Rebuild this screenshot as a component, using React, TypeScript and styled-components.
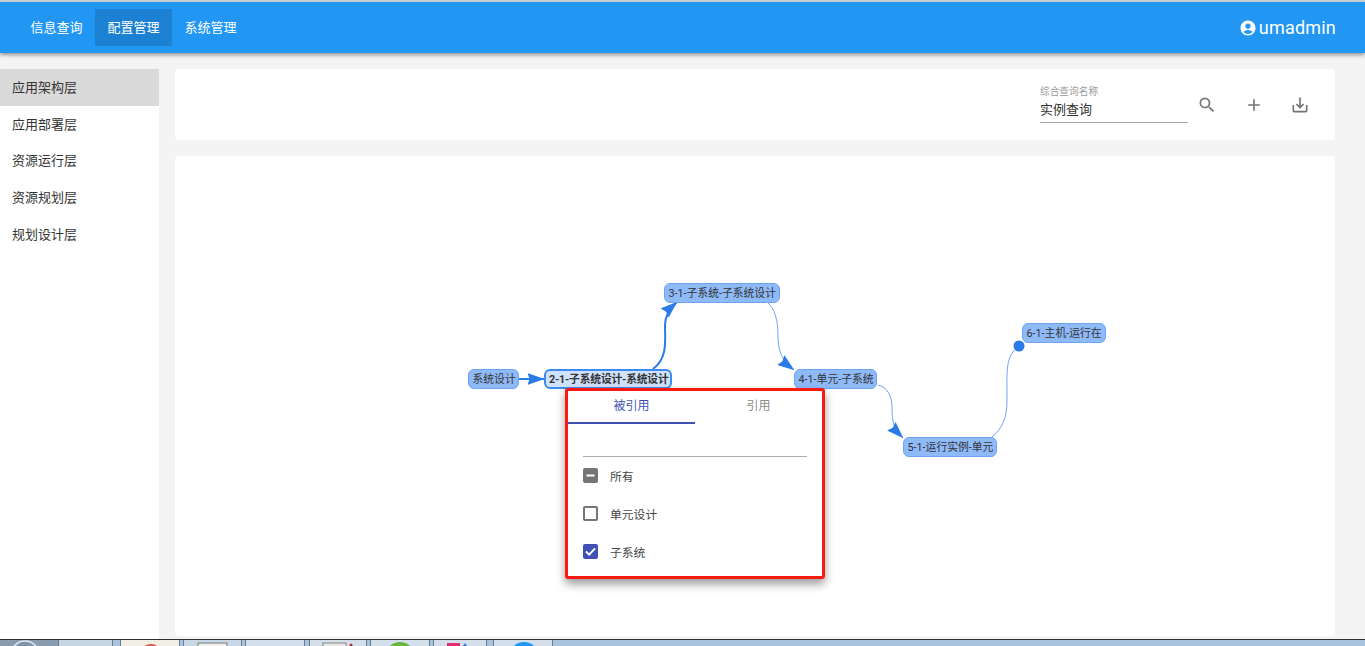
import React from 'react';
import styled, { createGlobalStyle } from 'styled-components';
import { MdAccountCircle, MdSearch, MdAdd, MdSaveAlt } from 'react-icons/md';

const GlobalStyle = createGlobalStyle`
  html, body {
    margin: 0;
    padding: 0;
    height: 100%;
    overflow: hidden;
    background: #f4f4f4;
    font-family: Roboto, "Noto Sans CJK SC", sans-serif;
  }
`;

const Page = styled.div`
  display: flex;
  flex-direction: column;
  width: 1365px;
  height: 646px;
  overflow: hidden;
`;

const Header = styled.header`
  display: flex;
  flex: none;
  align-items: center;
  justify-content: space-between;
  height: 51px;
  border-top: 2px solid #c9cccf;
  padding: 0 29px 0 18px;
  background: #2196f3;
  box-shadow: 0 2px 4px rgba(0, 0, 0, 0.4);
  position: relative;
  z-index: 2;
`;

const Nav = styled.nav`
  display: flex;
  height: 37px;
`;

const NavItem = styled.a<{ $active?: boolean }>`
  display: flex;
  align-items: center;
  padding: 0 12.5px 2px;
  font-size: 13px;
  color: #fff;
  background: ${({ $active }) => ($active ? '#1d81d3' : 'transparent')};
`;

const User = styled.div`
  display: flex;
  align-items: center;
  gap: 2px;
  font-size: 18px;
  letter-spacing: 0.2px;
  color: #fff;
`;

const Body = styled.div`
  display: flex;
  flex: 1;
  min-height: 0;
  padding-top: 16px;
`;

const Sidebar = styled.aside`
  flex: none;
  width: 159px;
  background: #fff;
`;

const MenuItem = styled.div<{ $active?: boolean }>`
  display: flex;
  align-items: center;
  box-sizing: border-box;
  height: 36.75px;
  padding: 0 0 2px 12px;
  font-size: 13px;
  color: #333;
  background: ${({ $active }) => ($active ? '#dadada' : 'transparent')};
`;

const Main = styled.main`
  display: flex;
  flex: 1;
  flex-direction: column;
  gap: 16px;
  padding: 0 30px 3px 16px;
`;

const SearchCard = styled.section`
  display: flex;
  flex: none;
  align-items: center;
  justify-content: flex-end;
  height: 71px;
  padding-right: 11.75px;
  border-radius: 4px;
  background: #fff;
`;

const Field = styled.div`
  display: flex;
  flex-direction: column;
  width: 148px;
  margin: 0 -4.25px 2px 0;
  border-bottom: 1px solid #a8a8a8;
`;

const FieldLabel = styled.label`
  font-size: 9.7px;
  line-height: 13px;
  color: #999;
`;

const FieldValue = styled.div`
  height: 24px;
  font-size: 13px;
  line-height: 24px;
  color: #333;
`;

const IconButton = styled.button`
  display: flex;
  align-items: center;
  justify-content: center;
  width: 46.5px;
  height: 40px;
  padding: 0;
  border: 0;
  background: none;
  color: #757575;
`;

const GraphCard = styled.section`
  position: relative;
  flex: 1;
  border-radius: 4px;
  background: #fff;
`;

const EdgeLayer = styled.svg`
  position: absolute;
  inset: 0;
  width: 100%;
  height: 100%;
`;

const GraphNode = styled.div<{ $selected?: boolean }>`
  position: absolute;
  box-sizing: border-box;
  height: 20px;
  padding: 0 ${({ $selected }) => ($selected ? 3 : 3.5)}px;
  border: ${({ $selected }) => ($selected ? '2px solid #3d8bf0' : '1px solid #6ea4f5')};
  border-radius: 6px;
  font-size: 10.8px;
  font-weight: ${({ $selected }) => ($selected ? 700 : 400)};
  letter-spacing: ${({ $selected }) => ($selected ? -0.2 : 0)}px;
  line-height: ${({ $selected }) => ($selected ? 17 : 19)}px;
  white-space: nowrap;
  color: #333;
  background: ${({ $selected }) => ($selected ? '#cfe2fc' : '#8fbafa')};
`;

const Popover = styled.div`
  position: absolute;
  left: 390px;
  top: 232px;
  box-sizing: border-box;
  width: 260px;
  height: 191px;
  border: 3px solid #fa1a10;
  border-radius: 3px;
  background: #fff;
  box-shadow: 0 5px 10px rgba(0, 0, 0, 0.4);
`;

const Tabs = styled.div`
  display: flex;
  height: 33px;
`;

const Tab = styled.div<{ $active?: boolean }>`
  flex: 1;
  box-sizing: border-box;
  height: 33px;
  font-size: 12px;
  line-height: 31px;
  text-align: center;
  color: ${({ $active }) => ($active ? '#3f51b5' : '#8a8a8a')};
  border-bottom: 2px solid ${({ $active }) => ($active ? '#3f51b5' : 'transparent')};
`;

const FilterLine = styled.div`
  height: 1px;
  margin: 32px 15px 0;
  background: #adadad;
`;

const OptionList = styled.div`
  display: flex;
  flex-direction: column;
  gap: 8px;
  padding: 0 15px;
  margin-top: 3px;
`;

const Option = styled.div`
  display: flex;
  align-items: center;
  gap: 12px;
  height: 30px;
  font-size: 11.8px;
  color: #444;
`;

const Box = styled.span<{ $color: string; $filled?: boolean }>`
  display: flex;
  align-items: center;
  justify-content: center;
  box-sizing: border-box;
  width: 15px;
  height: 15px;
  border: 2px solid ${({ $color }) => $color};
  border-radius: 2px;
  background: ${({ $filled, $color }) => ($filled ? $color : 'transparent')};
`;

const Taskbar = styled.footer`
  display: flex;
  flex: none;
  box-sizing: border-box;
  height: 7px;
  overflow: hidden;
  border-top: 1px solid #2a2f36;
  background: linear-gradient(90deg, #8a9cb0 0, #8a9cb0 58px, #a9c3dd 58px, #a9c3dd 100%);
`;

const StartOrb = styled.svg`
  flex: none;
  width: 58px;
  height: 6px;
`;

const TaskButton = styled.div<{ $width: number; $gap: number; $tone: string }>`
  flex: none;
  box-sizing: border-box;
  width: ${({ $width }) => $width}px;
  margin-left: ${({ $gap }) => $gap}px;
  border-left: 1px solid #6a7c90;
  border-right: 1px solid #6a7c90;
  background: ${({ $tone }) => $tone};
  svg {
    display: block;
  }
`;

const nodes = [
  { label: '系统设计', left: 293, top: 213, width: 51 },
  { label: '2-1-子系统设计-系统设计', left: 369, top: 213, width: 128, selected: true },
  { label: '3-1-子系统-子系统设计', left: 489, top: 127, width: 116 },
  { label: '4-1-单元-子系统', left: 619, top: 213, width: 83 },
  { label: '5-1-运行实例-单元', left: 728, top: 281, width: 94 },
  { label: '6-1-主机-运行在', left: 847, top: 167, width: 84 },
];

const tasks = [
  { width: 55, gap: 0, tone: '#c8d6e4', art: null },
  { width: 60, gap: 7, tone: '#f1eee4', art: <circle cx="30" cy="15" r="11" fill="#d9534f" /> },
  { width: 59, gap: 3, tone: '#c9d8e7', art: <rect x="14" y="3" width="29" height="8" fill="#eee" stroke="#777" /> },
  { width: 60, gap: 3, tone: '#d3e0ec', art: <circle cx="27" cy="17" r="11" fill="#7cc4dc" /> },
  { width: 58, gap: 4, tone: '#d3dfeb', art: <><rect x="13" y="3" width="23" height="8" fill="#e8e8e8" stroke="#888" /><circle cx="41" cy="5" r="1.5" fill="#a33" /></> },
  { width: 60, gap: 3, tone: '#d3e0ec', art: <circle cx="29" cy="17" r="15" fill="#6cb33f" /> },
  { width: 54, gap: 3, tone: '#d3e0ec', art: <><rect x="13" y="3" width="13" height="8" fill="#e0316e" /><path d="M31 3 L27 9 H35 Z" fill="#3a6fd0" /></> },
  { width: 60, gap: 6, tone: '#d3e0ec', art: <circle cx="30" cy="17" r="15" fill="#2196f3" /> },
];

export default function App() {
  return (
    <Page>
      <GlobalStyle />
      <Header>
        <Nav>
          <NavItem>信息查询</NavItem>
          <NavItem $active>配置管理</NavItem>
          <NavItem>系统管理</NavItem>
        </Nav>
        <User>
          <MdAccountCircle size={18} />
          umadmin
        </User>
      </Header>
      <Body>
        <Sidebar>
          <MenuItem $active>应用架构层</MenuItem>
          <MenuItem>应用部署层</MenuItem>
          <MenuItem>资源运行层</MenuItem>
          <MenuItem>资源规划层</MenuItem>
          <MenuItem>规划设计层</MenuItem>
        </Sidebar>
        <Main>
          <SearchCard>
            <Field>
              <FieldLabel>综合查询名称</FieldLabel>
              <FieldValue>实例查询</FieldValue>
            </Field>
            <IconButton><MdSearch size={20} /></IconButton>
            <IconButton><MdAdd size={20} /></IconButton>
            <IconButton><MdSaveAlt size={20} /></IconButton>
          </SearchCard>
          <GraphCard>
            <EdgeLayer>
              <defs>
                <marker id="arrow" markerWidth="17" markerHeight="12" refX="16.5" refY="6" orient="auto" markerUnits="userSpaceOnUse">
                  <path d="M0 0 L17 6 L0 12 L2 6 Z" fill="#2a7ae8" />
                </marker>
              </defs>
              <path d="M344 223 L369 223" fill="none" stroke="#2a7ae8" strokeWidth="2" markerEnd="url(#arrow)" />
              <path d="M478 213 C493 202 490 184 490 169 C490 162 493 154 502 146" fill="none" stroke="#2a7ae8" strokeWidth="2" markerEnd="url(#arrow)" />
              <path d="M592 146 C600 152 603 165 603 180 C603 195 607 205 619 214" fill="none" stroke="#6ea4f5" strokeWidth="1" markerEnd="url(#arrow)" />
              <path d="M703 229 C712 231 717 240 717 251 C717 265 718 272 728 282" fill="none" stroke="#6ea4f5" strokeWidth="1" markerEnd="url(#arrow)" />
              <path d="M817 281 C827 273 832 262 832 244 C832 215 830 200 844 190" fill="none" stroke="#6ea4f5" strokeWidth="1" />
              <circle cx="844" cy="190" r="5.5" fill="#2a7ae8" />
            </EdgeLayer>
            {nodes.map((n) => (
              <GraphNode
                key={n.label}
                $selected={n.selected}
                style={{ left: n.left, top: n.top, width: n.width }}
              >
                {n.label}
              </GraphNode>
            ))}
            <Popover>
              <Tabs>
                <Tab $active>被引用</Tab>
                <Tab>引用</Tab>
              </Tabs>
              <FilterLine />
              <OptionList>
                <Option>
                  <Box $color="#757575" $filled>
                    <svg width="9" height="9" viewBox="0 0 9 9"><path d="M0.5 4.5 H8.5" stroke="#fff" strokeWidth="2" /></svg>
                  </Box>
                  所有
                </Option>
                <Option>
                  <Box $color="#757575" />
                  单元设计
                </Option>
                <Option>
                  <Box $color="#3f51b5" $filled>
                    <svg width="11" height="11" viewBox="0 0 12 12"><path d="M1 6 L4.5 9.5 L11 2.5" fill="none" stroke="#fff" strokeWidth="2" /></svg>
                  </Box>
                  子系统
                </Option>
              </OptionList>
            </Popover>
          </GraphCard>
        </Main>
      </Body>
      <Taskbar>
        <StartOrb viewBox="0 0 58 6">
          <circle cx="25" cy="15" r="14" fill="#7f93a8" stroke="#dfe8f0" strokeWidth="1.5" />
        </StartOrb>
        {tasks.map((t, i) => (
          <TaskButton key={i} $width={t.width} $gap={t.gap} $tone={t.tone}>
            <svg width={t.width - 2} height="6">{t.art}</svg>
          </TaskButton>
        ))}
      </Taskbar>
    </Page>
  );
}
